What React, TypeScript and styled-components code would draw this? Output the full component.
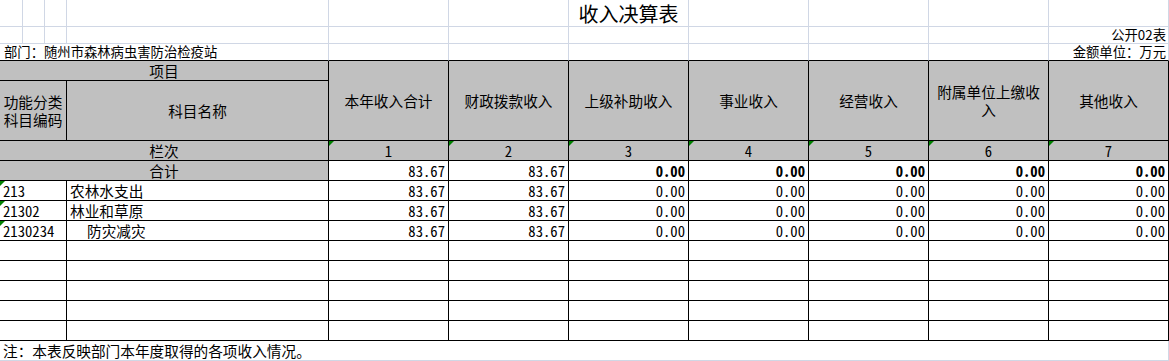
import React from 'react';
import styled, { createGlobalStyle } from 'styled-components';

const GRID = '#D0D7E5';
const LINE = '#000000';
const HEAD_BG = '#C0C0C0';
const CJK = '"Noto Sans CJK SC", "Noto Sans", sans-serif';
const MONO = '"Noto Sans Mono CJK SC", "Liberation Mono", monospace';

const GlobalStyle = createGlobalStyle`
  html, body { margin: 0; padding: 0; background: #ffffff; }
  body { font-family: ${CJK}; color: #000; }
`;

const Sheet = styled.div`
  display: grid;
  grid-template-columns: 23px 22px 22px 262px repeat(7, 120px);
  grid-template-rows: 27px 17px 17px 20px 60px repeat(10, 20px) 20px;
  width: 1169px;
  height: 361px;
  overflow: hidden;
`;

type Edge = 'grid' | 'line' | 'none';
type Align = 'left' | 'center' | 'right';

const edge = (e?: Edge) => (e === 'line' ? LINE : e === 'none' ? 'transparent' : GRID);
const justify = (a?: Align) => (a === 'right' ? 'flex-end' : a === 'center' ? 'center' : 'flex-start');

interface CellProps {
  $span?: number;
  $rowSpan?: number;
  $right?: Edge;
  $bottom?: Edge;
  $align?: Align;
}

const Cell = styled.div<CellProps>`
  position: relative;
  box-sizing: border-box;
  grid-column: span ${(p) => p.$span ?? 1};
  grid-row: span ${(p) => p.$rowSpan ?? 1};
  border-right: 1px solid ${(p) => edge(p.$right)};
  border-bottom: 1px solid ${(p) => edge(p.$bottom)};
  display: flex;
  justify-content: ${(p) => justify(p.$align)};
  overflow: visible;
  white-space: nowrap;
`;

/* light sheet cells above the table */
const SheetCell = styled(Cell)`
  align-items: flex-end;
  padding: 0 2px 1px 4px;
  font-size: 13.33px;
  line-height: 14px;
`;

const Title = styled(Cell)`
  align-items: flex-end;
  font-size: 20px;
  line-height: 24px;
`;

/* gray header cells */
const HeadCell = styled(Cell)`
  background: ${HEAD_BG};
  align-items: center;
  text-align: center;
  white-space: normal;
  padding: 0 3px;
  font-size: 14.67px;
  line-height: 18px;
`;

const IndexCell = styled(HeadCell)`
  font-family: ${MONO};
`;

/* white data cells */
const TextCell = styled(Cell)<{ $indent?: number }>`
  align-items: center;
  padding: 0 3px 0 ${(p) => 3 + (p.$indent ?? 0)}px;
  font-size: 14.67px;
  line-height: 18px;
`;

const CodeCell = styled(TextCell)`
  font-family: ${MONO};
`;

const NumCell = styled(Cell)<{ $bold?: boolean }>`
  align-items: center;
  padding: 1px 3px 0 3px;
  font-family: ${MONO};
  font-size: 14.67px;
  line-height: 18px;
  font-weight: ${(p) => (p.$bold ? 700 : 400)};
`;

const Note = styled(Cell)`
  align-items: center;
  padding: 0 3px;
  font-size: 14.67px;
  line-height: 18px;
`;

const Marker = styled.span`
  position: absolute;
  top: 0;
  left: 0;
  width: 0;
  height: 0;
  border-top: 5px solid #008000;
  border-right: 5px solid transparent;
`;

const HEADERS = ['本年收入合计', '财政拨款收入', '上级补助收入', '事业收入', '经营收入', '附属单位上缴收入', '其他收入'];

const TOTAL: { v: string; bold: boolean }[] = [
  { v: '83.67', bold: false },
  { v: '83.67', bold: false },
  { v: '0.00', bold: true },
  { v: '0.00', bold: true },
  { v: '0.00', bold: true },
  { v: '0.00', bold: true },
  { v: '0.00', bold: true },
];

const ROWS = [
  { code: '213', name: '农林水支出', indent: 0 },
  { code: '21302', name: '林业和草原', indent: 0 },
  { code: '2130234', name: '防灾减灾', indent: 17 },
];
const ROW_VALUES = ['83.67', '83.67', '0.00', '0.00', '0.00', '0.00', '0.00'];

export default function App() {
  const cols = Array.from({ length: 11 }, (_, i) => i);
  return (
    <>
      <GlobalStyle />
      <Sheet>
        {/* row 1: title */}
        {cols.map((i) =>
          i === 6 ? (
            <Title key={`t${i}`} $align="center">收入决算表</Title>
          ) : (
            <SheetCell key={`t${i}`} />
          )
        )}
        {/* row 2 */}
        {cols.map((i) =>
          i === 10 ? (
            <SheetCell key={`a${i}`} $align="right">公开02表</SheetCell>
          ) : (
            <SheetCell key={`a${i}`} />
          )
        )}
        {/* row 3 */}
        <SheetCell $span={4} $bottom="line">部门：随州市森林病虫害防治检疫站</SheetCell>
        {cols.slice(4, 10).map((i) => (
          <SheetCell key={`b${i}`} $bottom="line" />
        ))}
        <SheetCell $align="right" $bottom="line">金额单位：万元</SheetCell>

        {/* header */}
        <HeadCell $span={4} $right="line" $bottom="line" $align="center">项目</HeadCell>
        {HEADERS.map((h) => (
          <HeadCell key={h} $rowSpan={2} $right="line" $bottom="line" $align="center">
            {h}
          </HeadCell>
        ))}
        <HeadCell $span={3} $right="line" $bottom="line" $align="center">
          功能分类科目编码
        </HeadCell>
        <HeadCell $right="line" $bottom="line" $align="center">科目名称</HeadCell>

        {/* 栏次 */}
        <HeadCell $span={4} $right="line" $bottom="line" $align="center">栏次</HeadCell>
        {HEADERS.map((_, i) => (
          <IndexCell key={`i${i}`} $right="line" $bottom="line" $align="center">
            <Marker />
            {i + 1}
          </IndexCell>
        ))}

        {/* 合计 */}
        <HeadCell $span={4} $right="line" $bottom="line" $align="center">合计</HeadCell>
        {TOTAL.map((t, i) => (
          <NumCell key={`s${i}`} $right="line" $bottom="line" $align="right" $bold={t.bold}>
            {t.v}
          </NumCell>
        ))}

        {/* data rows */}
        {ROWS.map((r) => (
          <React.Fragment key={r.code}>
            <CodeCell $span={3} $right="line" $bottom="line">
              <Marker />
              {r.code}
            </CodeCell>
            <TextCell $right="line" $bottom="line" $indent={r.indent}>{r.name}</TextCell>
            {ROW_VALUES.map((v, i) => (
              <NumCell key={`${r.code}-${i}`} $right="line" $bottom="line" $align="right">
                {v}
              </NumCell>
            ))}
          </React.Fragment>
        ))}

        {/* empty rows */}
        {Array.from({ length: 5 }, (_, k) => (
          <React.Fragment key={`e${k}`}>
            <CodeCell $span={3} $right="line" $bottom="line" />
            <TextCell $right="line" $bottom="line" />
            {HEADERS.map((_, i) => (
              <NumCell key={`e${k}-${i}`} $right="line" $bottom="line" />
            ))}
          </React.Fragment>
        ))}

        {/* note */}
        <Note $span={11}>注：本表反映部门本年度取得的各项收入情况。</Note>
      </Sheet>
    </>
  );
}
